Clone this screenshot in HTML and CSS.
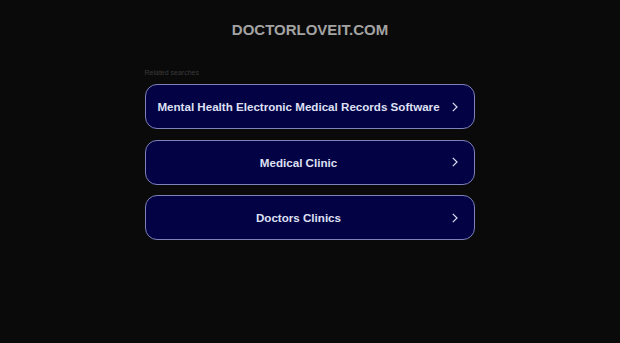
FILE: index.html
```html
<!DOCTYPE html>
<html>
<head>
<meta charset="utf-8">
<link rel="stylesheet" href="styles.css">
</head>
<body>
<div class="page">
  <div class="domain">DOCTORLOVEIT.COM</div>
  <div class="related">
    <div class="label">Related searches</div>
    <a class="item" href="#"><span class="text">Mental Health Electronic Medical Records Software</span><svg class="chev" viewBox="0 0 6 10" width="6" height="10"><path d="M0.8 0.8 L5 5 L0.8 9.2" fill="none" stroke="#dfe0f5" stroke-width="1.2"/></svg></a>
    <a class="item" href="#"><span class="text">Medical Clinic</span><svg class="chev" viewBox="0 0 6 10" width="6" height="10"><path d="M0.8 0.8 L5 5 L0.8 9.2" fill="none" stroke="#dfe0f5" stroke-width="1.2"/></svg></a>
    <a class="item" href="#"><span class="text">Doctors Clinics</span><svg class="chev" viewBox="0 0 6 10" width="6" height="10"><path d="M0.8 0.8 L5 5 L0.8 9.2" fill="none" stroke="#dfe0f5" stroke-width="1.2"/></svg></a>
  </div>
</div>
</body>
</html>
```
FILE: styles.css
```css
html, body {
  margin: 0;
  padding: 0;
  background: #0a0a0a;
  font-family: "Liberation Sans", Arial, sans-serif;
}
.page {
  width: 620px;
  height: 343px;
  display: flex;
  flex-direction: column;
  align-items: center;
}
.domain {
  margin-top: 21px;
  height: 18px;
  line-height: 18px;
  font-size: 15px;
  font-weight: bold;
  color: #a3a3a3;
}
.related {
  margin-top: 30px;
  margin-left: -1px;
  width: 330px;
  display: flex;
  flex-direction: column;
}
.label {
  font-size: 7px;
  line-height: 8px;
  color: #3a3a3a;
  margin-bottom: 7px;
}
.item {
  box-sizing: border-box;
  height: 45px;
  margin-bottom: 10.5px;
  border: 1px solid #7d82b8;
  border-radius: 12px;
  background: #020244;
  display: flex;
  align-items: center;
  padding: 0 16px 0 8px;
  text-decoration: none;
}
.text {
  flex: 1;
  text-align: center;
  white-space: nowrap;
  color: #dfe0f4;
  font-size: 11.6px;
  font-weight: bold;
}
.chev {
  margin-left: 8px;
  flex: none;
}
```
